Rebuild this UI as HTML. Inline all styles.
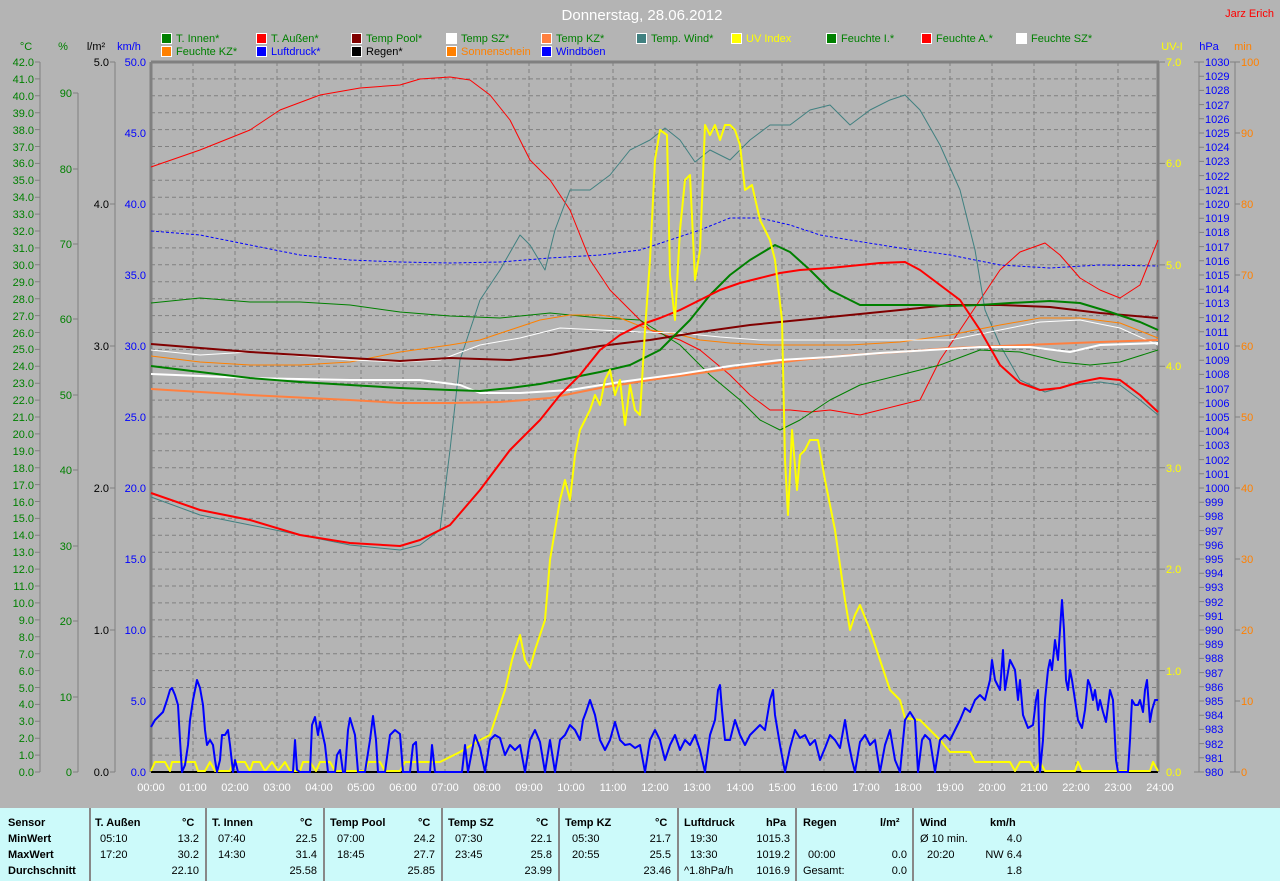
<!DOCTYPE html>
<html><head><meta charset="utf-8">
<style>
html,body{margin:0;padding:0;background:#b4b4b4;}
body{width:1280px;height:881px;position:relative;overflow:hidden;font-family:"Liberation Sans",sans-serif;}
svg{position:absolute;left:0;top:0;}
svg text{font-family:"Liberation Sans",sans-serif;font-size:11px;}
.tbl{position:absolute;left:0;top:808px;width:1280px;height:73px;background:#ccfafa;font-size:11px;color:#000;}
.col{position:absolute;top:0;height:73px;border-left:2px solid #888;}
.r{position:absolute;white-space:nowrap;}
.b{font-weight:bold;}
</style></head><body>
<svg width="1280" height="881" viewBox="0 0 1280 881">
<text x="642" y="20" fill="#fff" font-size="15" text-anchor="middle" style="font-size:15px">Donnerstag, 28.06.2012</text>
<text x="1274" y="17" fill="#f00" text-anchor="end">Jarz Erich</text>
<!-- legend -->
<g stroke="#fff" stroke-width="1">
<rect x="161.5" y="33.5" width="10" height="10" fill="#008000"/>
<rect x="256.5" y="33.5" width="10" height="10" fill="#f00"/>
<rect x="351.5" y="33.5" width="10" height="10" fill="#800000"/>
<rect x="446.5" y="33.5" width="10" height="10" fill="#fff"/>
<rect x="541.5" y="33.5" width="10" height="10" fill="#ff8040"/>
<rect x="636.5" y="33.5" width="10" height="10" fill="#408080"/>
<rect x="731.5" y="33.5" width="10" height="10" fill="#ff0"/>
<rect x="826.5" y="33.5" width="10" height="10" fill="#008000"/>
<rect x="921.5" y="33.5" width="10" height="10" fill="#f00"/>
<rect x="1016.5" y="33.5" width="10" height="10" fill="#fff"/>
<rect x="161.5" y="46.5" width="10" height="10" fill="#ff8000"/>
<rect x="256.5" y="46.5" width="10" height="10" fill="#00f"/>
<rect x="351.5" y="46.5" width="10" height="10" fill="#000"/>
<rect x="446.5" y="46.5" width="10" height="10" fill="#ff8000"/>
<rect x="541.5" y="46.5" width="10" height="10" fill="#00f"/>
</g>
<g>
<text x="176" y="42" fill="#008000">T. Innen*</text>
<text x="271" y="42" fill="#008000">T. Außen*</text>
<text x="366" y="42" fill="#008000">Temp Pool*</text>
<text x="461" y="42" fill="#008000">Temp SZ*</text>
<text x="556" y="42" fill="#008000">Temp KZ*</text>
<text x="651" y="42" fill="#008000">Temp. Wind*</text>
<text x="746" y="42" fill="#ff0">UV Index</text>
<text x="841" y="42" fill="#008000">Feuchte I.*</text>
<text x="936" y="42" fill="#008000">Feuchte A.*</text>
<text x="1031" y="42" fill="#008000">Feuchte SZ*</text>
<text x="176" y="55" fill="#008000">Feuchte KZ*</text>
<text x="271" y="55" fill="#00f">Luftdruck*</text>
<text x="366" y="55" fill="#000">Regen*</text>
<text x="461" y="55" fill="#ff8000">Sonnenschein</text>
<text x="556" y="55" fill="#00f">Windböen</text>
</g>
<!-- axis headers -->
<text x="26" y="50" fill="#008000" text-anchor="middle">°C</text>
<text x="63" y="50" fill="#008000" text-anchor="middle">%</text>
<text x="96" y="50" fill="#000" text-anchor="middle">l/m²</text>
<text x="129" y="50" fill="#00f" text-anchor="middle">km/h</text>
<text x="1172" y="50" fill="#ff0" text-anchor="middle">UV-I</text>
<text x="1209" y="50" fill="#00f" text-anchor="middle">hPa</text>
<text x="1243" y="50" fill="#ff8000" text-anchor="middle">min</text>
<!-- grid -->
<g stroke="#808080" stroke-width="1" stroke-dasharray="4,3" fill="none">
<path d="M151 78.9H1158M151 95.8H1158M151 112.7H1158M151 129.6H1158M151 146.5H1158M151 163.4H1158M151 180.3H1158M151 197.2H1158M151 214.1H1158M151 231H1158M151 247.9H1158M151 264.8H1158M151 281.8H1158M151 298.7H1158M151 315.6H1158M151 332.5H1158M151 349.4H1158M151 366.3H1158M151 383.2H1158M151 400.1H1158M151 417H1158M151 433.9H1158M151 450.8H1158M151 467.7H1158M151 484.6H1158M151 501.5H1158M151 518.4H1158M151 535.3H1158M151 552.2H1158M151 569.1H1158M151 586H1158M151 602.9H1158M151 619.9H1158M151 636.8H1158M151 653.7H1158M151 670.6H1158M151 687.5H1158M151 704.4H1158M151 721.3H1158M151 738.2H1158M151 755.1H1158"/>
<path d="M193 62V772M235 62V772M277 62V772M319 62V772M361 62V772M403 62V772M445 62V772M487 62V772M529 62V772M571 62V772M613 62V772M655 62V772M697 62V772M740 62V772M782 62V772M824 62V772M866 62V772M908 62V772M950 62V772M992 62V772M1034 62V772M1076 62V772M1118 62V772"/>
</g>
<g stroke="#808080" stroke-width="3" fill="none">
<path d="M151 62H1159M151 62V772M1158 62V772"/>
</g>
<!-- axis lines and ticks -->
<g stroke="#808080" stroke-width="1" fill="none">
<path d="M40 62V772M78 93V772M115 62V772M1199 62V772M1235 62V772"/>
<path d="M35 62H40M35 78.9H40M35 95.8H40M35 112.7H40M35 129.6H40M35 146.5H40M35 163.4H40M35 180.3H40M35 197.2H40M35 214.1H40M35 231H40M35 247.9H40M35 264.8H40M35 281.8H40M35 298.7H40M35 315.6H40M35 332.5H40M35 349.4H40M35 366.3H40M35 383.2H40M35 400.1H40M35 417H40M35 433.9H40M35 450.8H40M35 467.7H40M35 484.6H40M35 501.5H40M35 518.4H40M35 535.3H40M35 552.2H40M35 569.1H40M35 586H40M35 602.9H40M35 619.9H40M35 636.8H40M35 653.7H40M35 670.6H40M35 687.5H40M35 704.4H40M35 721.3H40M35 738.2H40M35 755.1H40M35 772H40"/>
<path d="M73 93H78M73 169H78M73 244H78M73 319H78M73 395H78M73 470H78M73 546H78M73 621H78M73 697H78M73 772H78"/>
<path d="M110 62H115M110 204H115M110 346H115M110 488H115M110 630H115M110 772H115"/>
<path d="M1159 62H1165M1159 163.4H1165M1159 264.9H1165M1159 366.3H1165M1159 467.7H1165M1159 569.1H1165M1159 670.6H1165"/>
<path d="M1194 62H1204M1199 76.2H1204M1199 90.4H1204M1199 104.6H1204M1199 118.8H1204M1199 133H1204M1199 147.2H1204M1199 161.4H1204M1199 175.6H1204M1199 189.8H1204M1199 204H1204M1199 218.2H1204M1199 232.4H1204M1199 246.6H1204M1199 260.8H1204M1199 275H1204M1199 289.2H1204M1199 303.4H1204M1199 317.6H1204M1199 331.8H1204M1199 346H1204M1199 360.2H1204M1199 374.4H1204M1199 388.6H1204M1199 402.8H1204M1199 417H1204M1199 431.2H1204M1199 445.4H1204M1199 459.6H1204M1199 473.8H1204M1199 488H1204M1199 502.2H1204M1199 516.4H1204M1199 530.6H1204M1199 544.8H1204M1199 559H1204M1199 573.2H1204M1199 587.4H1204M1199 601.6H1204M1199 615.8H1204M1199 630H1204M1199 644.2H1204M1199 658.4H1204M1199 672.6H1204M1199 686.8H1204M1199 701H1204M1199 715.2H1204M1199 729.4H1204M1199 743.6H1204M1199 757.8H1204M1194 772H1204"/>
<path d="M1230 62H1240M1235 133H1240M1235 204H1240M1235 275H1240M1235 346H1240M1235 417H1240M1235 488H1240M1235 559H1240M1235 630H1240M1235 701H1240M1230 772H1240"/>
</g>
<!-- °C labels -->
<g fill="#008000" text-anchor="end">
<text x="34" y="66">42.0</text><text x="34" y="83">41.0</text><text x="34" y="100">40.0</text><text x="34" y="117">39.0</text><text x="34" y="134">38.0</text><text x="34" y="151">37.0</text><text x="34" y="167">36.0</text><text x="34" y="184">35.0</text><text x="34" y="201">34.0</text><text x="34" y="218">33.0</text><text x="34" y="235">32.0</text><text x="34" y="252">31.0</text><text x="34" y="269">30.0</text><text x="34" y="286">29.0</text><text x="34" y="303">28.0</text><text x="34" y="320">27.0</text><text x="34" y="337">26.0</text><text x="34" y="353">25.0</text><text x="34" y="370">24.0</text><text x="34" y="387">23.0</text><text x="34" y="404">22.0</text><text x="34" y="421">21.0</text><text x="34" y="438">20.0</text><text x="34" y="455">19.0</text><text x="34" y="472">18.0</text><text x="34" y="489">17.0</text><text x="34" y="506">16.0</text><text x="34" y="522">15.0</text><text x="34" y="539">14.0</text><text x="34" y="556">13.0</text><text x="34" y="573">12.0</text><text x="34" y="590">11.0</text><text x="34" y="607">10.0</text><text x="34" y="624">9.0</text><text x="34" y="641">8.0</text><text x="34" y="658">7.0</text><text x="34" y="675">6.0</text><text x="34" y="692">5.0</text><text x="34" y="708">4.0</text><text x="34" y="725">3.0</text><text x="34" y="742">2.0</text><text x="34" y="759">1.0</text><text x="34" y="776">0.0</text>
</g>
<g fill="#008000" text-anchor="end">
<text x="72" y="97">90</text><text x="72" y="173">80</text><text x="72" y="248">70</text><text x="72" y="323">60</text><text x="72" y="399">50</text><text x="72" y="474">40</text><text x="72" y="550">30</text><text x="72" y="625">20</text><text x="72" y="701">10</text><text x="72" y="776">0</text>
</g>
<g fill="#000" text-anchor="end">
<text x="109" y="66">5.0</text><text x="109" y="208">4.0</text><text x="109" y="350">3.0</text><text x="109" y="492">2.0</text><text x="109" y="634">1.0</text><text x="109" y="776">0.0</text>
</g>
<g fill="#00f" text-anchor="end">
<text x="146" y="66">50.0</text><text x="146" y="137">45.0</text><text x="146" y="208">40.0</text><text x="146" y="279">35.0</text><text x="146" y="350">30.0</text><text x="146" y="421">25.0</text><text x="146" y="492">20.0</text><text x="146" y="563">15.0</text><text x="146" y="634">10.0</text><text x="146" y="705">5.0</text><text x="146" y="776">0.0</text>
</g>
<g fill="#ff0">
<text x="1166" y="66">7.0</text><text x="1166" y="167">6.0</text><text x="1166" y="269">5.0</text><text x="1166" y="370">4.0</text><text x="1166" y="472">3.0</text><text x="1166" y="573">2.0</text><text x="1166" y="675">1.0</text><text x="1166" y="776">0.0</text>
</g>
<g fill="#00f">
<text x="1205" y="66">1030</text><text x="1205" y="80">1029</text><text x="1205" y="94">1028</text><text x="1205" y="109">1027</text><text x="1205" y="123">1026</text><text x="1205" y="137">1025</text><text x="1205" y="151">1024</text><text x="1205" y="165">1023</text><text x="1205" y="180">1022</text><text x="1205" y="194">1021</text><text x="1205" y="208">1020</text><text x="1205" y="222">1019</text><text x="1205" y="236">1018</text><text x="1205" y="251">1017</text><text x="1205" y="265">1016</text><text x="1205" y="279">1015</text><text x="1205" y="293">1014</text><text x="1205" y="307">1013</text><text x="1205" y="322">1012</text><text x="1205" y="336">1011</text><text x="1205" y="350">1010</text><text x="1205" y="364">1009</text><text x="1205" y="378">1008</text><text x="1205" y="393">1007</text><text x="1205" y="407">1006</text><text x="1205" y="421">1005</text><text x="1205" y="435">1004</text><text x="1205" y="449">1003</text><text x="1205" y="464">1002</text><text x="1205" y="478">1001</text><text x="1205" y="492">1000</text><text x="1205" y="506">999</text><text x="1205" y="520">998</text><text x="1205" y="535">997</text><text x="1205" y="549">996</text><text x="1205" y="563">995</text><text x="1205" y="577">994</text><text x="1205" y="591">993</text><text x="1205" y="606">992</text><text x="1205" y="620">991</text><text x="1205" y="634">990</text><text x="1205" y="648">989</text><text x="1205" y="662">988</text><text x="1205" y="677">987</text><text x="1205" y="691">986</text><text x="1205" y="705">985</text><text x="1205" y="719">984</text><text x="1205" y="733">983</text><text x="1205" y="748">982</text><text x="1205" y="762">981</text><text x="1205" y="776">980</text>
</g>
<g fill="#ff8000">
<text x="1241" y="66">100</text><text x="1241" y="137">90</text><text x="1241" y="208">80</text><text x="1241" y="279">70</text><text x="1241" y="350">60</text><text x="1241" y="421">50</text><text x="1241" y="492">40</text><text x="1241" y="563">30</text><text x="1241" y="634">20</text><text x="1241" y="705">10</text><text x="1241" y="776">0</text>
</g>
<!-- time labels -->
<g fill="#fff" text-anchor="middle">
<text x="151" y="791">00:00</text><text x="193" y="791">01:00</text><text x="235" y="791">02:00</text><text x="277" y="791">03:00</text><text x="319" y="791">04:00</text><text x="361" y="791">05:00</text><text x="403" y="791">06:00</text><text x="445" y="791">07:00</text><text x="487" y="791">08:00</text><text x="529" y="791">09:00</text><text x="571" y="791">10:00</text><text x="613" y="791">11:00</text><text x="655" y="791">12:00</text><text x="697" y="791">13:00</text><text x="740" y="791">14:00</text><text x="782" y="791">15:00</text><text x="824" y="791">16:00</text><text x="866" y="791">17:00</text><text x="908" y="791">18:00</text><text x="950" y="791">19:00</text><text x="992" y="791">20:00</text><text x="1034" y="791">21:00</text><text x="1076" y="791">22:00</text><text x="1118" y="791">23:00</text><text x="1160" y="791">24:00</text>
</g>
<!-- data -->
<g fill="none" stroke-linejoin="round">
<polyline stroke="#000" stroke-width="2" points="151,772 1158,772"/>
<!-- Feuchte A thin red -->
<polyline stroke="#f00" stroke-width="1" points="151,167 200,150 250,130 280,110 320,95 360,88 400,85 420,79 450,77 470,80 490,95 510,120 530,160 550,180 570,210 590,260 610,290 630,310 650,330 680,340 700,350 730,375 750,395 770,410 790,410 810,412 830,410 860,415 880,410 900,405 920,400 940,360 960,330 980,300 1000,270 1020,252 1045,243 1060,255 1080,278 1100,290 1120,298 1140,285 1158,240"/>
<!-- Temp Wind teal -->
<polyline stroke="#408080" stroke-width="1" points="151,497 200,515 250,525 300,535 350,545 400,550 420,545 440,530 450,450 460,360 470,330 480,300 500,270 520,235 530,245 545,270 555,230 570,190 590,190 610,175 630,150 650,140 665,128 680,140 695,162 710,150 730,160 750,140 770,125 790,125 810,110 830,105 850,125 870,110 890,100 905,95 920,110 940,145 960,190 975,250 985,310 1000,345 1020,380 1045,392 1070,385 1100,382 1120,385 1140,400 1158,415"/>
<!-- Feuchte I thin green -->
<polyline stroke="#008000" stroke-width="1" points="151,303 200,298 250,302 300,302 350,305 400,312 450,316 500,318 550,313 600,318 640,320 680,345 710,375 740,400 760,420 780,430 800,420 830,400 860,385 900,375 940,365 980,350 1020,352 1060,362 1090,365 1120,362 1158,350"/>
<!-- Feuchte KZ thin orange -->
<polyline stroke="#ff8000" stroke-width="1" points="151,356 200,362 250,365 300,365 350,362 400,352 450,345 480,340 510,330 540,320 570,315 600,315 620,318 650,330 680,335 700,340 730,343 770,345 800,345 850,345 900,342 950,335 1000,325 1040,318 1080,318 1120,323 1158,338"/>
<!-- Feuchte SZ thin white -->
<polyline stroke="#fff" stroke-width="1" points="151,350 200,355 250,352 300,356 350,360 400,362 440,360 480,345 520,338 560,328 600,330 640,332 680,333 720,337 760,340 800,340 850,340 900,340 950,340 1000,330 1040,322 1080,320 1120,328 1158,345"/>
<!-- Luftdruck dashed -->
<polyline stroke="#00f" stroke-width="1" stroke-dasharray="3,2" points="151,231 200,235 250,245 300,255 350,260 400,262 450,263 500,262 550,258 600,255 640,250 670,240 700,230 730,218 760,218 790,225 820,235 850,240 900,248 950,255 1000,265 1050,268 1100,265 1158,266"/>
<!-- Temp KZ thick orange -->
<polyline stroke="#ff8040" stroke-width="2" points="151,389 250,395 350,400 400,403 450,403 500,402 550,398 600,388 650,380 700,373 750,366 800,360 850,355 900,352 950,348 1000,346 1050,344 1100,342 1158,340"/>
<!-- Temp SZ thick white -->
<polyline stroke="#fff" stroke-width="2" points="151,374 250,378 350,380 420,380 460,385 480,393 520,393 570,390 620,382 680,374 730,366 780,360 830,357 880,353 930,350 980,347 1030,347 1070,352 1100,345 1158,343"/>
<!-- Temp Pool -->
<polyline stroke="#800000" stroke-width="2" points="151,344 250,352 350,358 400,361 450,358 510,360 550,355 600,346 650,340 700,332 750,325 800,320 850,315 900,310 950,305 1000,305 1050,307 1100,313 1158,318"/>
<!-- T Innen -->
<polyline stroke="#008000" stroke-width="2" points="151,366 200,372 250,378 300,382 350,385 400,388 450,390 480,391 510,388 540,384 570,378 600,372 630,365 660,350 690,320 710,295 730,275 750,260 775,245 790,252 810,270 830,290 860,305 890,305 920,305 950,306 980,305 1010,303 1050,301 1080,303 1110,312 1140,322 1158,330"/>
<!-- T Aussen -->
<polyline stroke="#f00" stroke-width="2" points="151,493 200,510 250,520 300,535 350,543 400,546 420,540 450,525 480,490 510,450 540,420 560,395 580,375 600,350 620,335 640,325 660,318 680,310 700,300 720,290 740,283 760,278 780,273 800,270 830,268 860,265 880,263 905,262 920,270 940,285 960,300 980,330 1000,365 1020,383 1040,390 1060,388 1080,382 1100,378 1120,380 1140,395 1158,412"/>
<!-- UV -->
<polyline stroke="#ff0" stroke-width="2" points="151,771 155,762 165,762 170,771 172,762 195,762 198,771 205,771 210,762 215,771 230,771 233,762 245,762 250,771 253,762 260,762 265,771 272,762 278,771 285,762 290,771 300,771 303,762 310,762 316,771 320,762 330,762 335,771 345,771 350,771 365,771 368,762 380,762 385,771 400,771 405,762 435,762 440,762 460,752 480,740 490,735 495,720 505,690 512,660 515,650 520,635 525,660 530,668 535,650 545,620 550,560 560,500 565,480 570,500 575,455 580,430 585,420 590,410 595,395 600,405 605,380 610,370 615,395 620,380 625,425 630,385 635,410 640,415 645,330 650,260 655,160 660,130 667,135 670,275 675,320 680,230 685,180 690,175 695,280 700,250 705,125 710,135 715,125 720,140 725,125 730,125 735,130 740,145 745,190 752,185 760,220 770,240 775,260 782,320 785,460 788,515 792,430 797,490 800,455 805,450 810,440 818,440 825,480 835,530 845,600 850,630 855,615 860,605 870,630 880,660 890,690 900,700 905,718 920,720 930,730 940,740 950,752 970,752 975,762 1010,762 1015,771 1020,762 1030,762 1035,771 1040,762 1045,771 1075,771 1078,762 1082,771 1150,771 1153,762 1158,771"/>
<!-- Wind -->
<polyline stroke="#00f" stroke-width="2" points="151,727 155,720 160,715 163,712 167,700 170,690 172,688 175,695 178,705 180,740 182,772 185,765 188,745 190,720 193,700 195,690 197,680 200,688 203,705 205,730 207,745 210,740 213,745 215,760 217,772 220,760 222,735 225,735 228,730 230,745 233,772 235,760 238,772 293,772 295,740 297,770 300,772 310,772 312,725 315,717 318,735 320,722 325,745 328,772 335,772 337,755 340,750 343,772 345,772 348,730 350,718 355,735 358,772 365,772 370,740 373,716 376,740 378,772 385,772 390,735 395,730 400,734 403,772 410,772 413,745 416,742 418,772 430,772 432,745 435,772 462,772 465,745 468,772 475,735 480,748 485,772 490,740 495,735 500,738 505,755 510,745 515,750 520,745 525,772 530,740 535,730 540,742 545,772 550,740 555,772 560,740 565,735 570,725 575,730 580,740 583,720 586,712 590,700 595,715 600,740 605,750 610,740 615,722 620,740 625,745 630,744 635,748 640,745 645,772 650,740 655,730 660,740 665,760 670,745 675,735 680,750 685,740 690,745 695,735 700,750 705,772 710,735 715,720 718,690 720,685 722,710 725,740 730,740 735,720 740,735 745,745 750,735 755,730 760,725 765,730 770,700 773,690 775,715 780,745 785,772 790,748 795,730 800,738 805,735 810,745 815,740 820,760 825,748 830,735 835,740 840,748 845,720 848,740 852,760 855,772 860,742 865,735 870,745 875,740 880,772 885,745 890,730 895,760 900,772 905,720 910,712 915,720 918,772 922,740 925,735 930,740 935,772 940,740 945,735 950,740 955,730 960,720 965,708 970,712 975,700 980,695 985,700 990,680 992,660 995,680 1000,690 1003,650 1005,690 1010,660 1015,670 1018,700 1020,680 1023,715 1028,728 1033,725 1036,700 1038,690 1040,772 1043,740 1045,700 1048,670 1050,660 1052,670 1055,640 1058,660 1060,630 1062,600 1064,630 1066,680 1068,690 1070,670 1072,680 1075,700 1078,720 1082,728 1085,710 1088,680 1090,685 1093,700 1095,690 1098,710 1100,700 1103,712 1106,722 1110,690 1113,700 1116,760 1118,772 1128,772 1130,740 1132,700 1135,705 1138,705 1140,700 1143,712 1145,690 1147,680 1150,722 1152,710 1155,700 1158,700"/>
</g>
</svg>
<div class="tbl">
<div class="r b" style="left:8px;top:9px">Sensor</div>
<div class="r b" style="left:8px;top:25px">MinWert</div>
<div class="r b" style="left:8px;top:41px">MaxWert</div>
<div class="r b" style="left:8px;top:57px">Durchschnitt</div>

<div class="col" style="left:89px"></div>
<div class="r b" style="left:95px;top:9px">T. Außen</div><div class="r b" style="left:182px;top:9px">°C</div>
<div class="r" style="left:100px;top:25px">05:10</div><div class="r" style="right:1081px;top:25px">13.2</div>
<div class="r" style="left:100px;top:41px">17:20</div><div class="r" style="right:1081px;top:41px">30.2</div>
<div class="r" style="right:1081px;top:57px">22.10</div>

<div class="col" style="left:205px"></div>
<div class="r b" style="left:212px;top:9px">T. Innen</div><div class="r b" style="left:300px;top:9px">°C</div>
<div class="r" style="left:218px;top:25px">07:40</div><div class="r" style="right:963px;top:25px">22.5</div>
<div class="r" style="left:218px;top:41px">14:30</div><div class="r" style="right:963px;top:41px">31.4</div>
<div class="r" style="right:963px;top:57px">25.58</div>

<div class="col" style="left:323px"></div>
<div class="r b" style="left:330px;top:9px">Temp Pool</div><div class="r b" style="left:418px;top:9px">°C</div>
<div class="r" style="left:337px;top:25px">07:00</div><div class="r" style="right:845px;top:25px">24.2</div>
<div class="r" style="left:337px;top:41px">18:45</div><div class="r" style="right:845px;top:41px">27.7</div>
<div class="r" style="right:845px;top:57px">25.85</div>

<div class="col" style="left:441px"></div>
<div class="r b" style="left:448px;top:9px">Temp SZ</div><div class="r b" style="left:536px;top:9px">°C</div>
<div class="r" style="left:455px;top:25px">07:30</div><div class="r" style="right:728px;top:25px">22.1</div>
<div class="r" style="left:455px;top:41px">23:45</div><div class="r" style="right:728px;top:41px">25.8</div>
<div class="r" style="right:728px;top:57px">23.99</div>

<div class="col" style="left:558px"></div>
<div class="r b" style="left:565px;top:9px">Temp KZ</div><div class="r b" style="left:655px;top:9px">°C</div>
<div class="r" style="left:572px;top:25px">05:30</div><div class="r" style="right:609px;top:25px">21.7</div>
<div class="r" style="left:572px;top:41px">20:55</div><div class="r" style="right:609px;top:41px">25.5</div>
<div class="r" style="right:609px;top:57px">23.46</div>

<div class="col" style="left:677px"></div>
<div class="r b" style="left:684px;top:9px">Luftdruck</div><div class="r b" style="left:766px;top:9px">hPa</div>
<div class="r" style="left:690px;top:25px">19:30</div><div class="r" style="right:490px;top:25px">1015.3</div>
<div class="r" style="left:690px;top:41px">13:30</div><div class="r" style="right:490px;top:41px">1019.2</div>
<div class="r" style="left:684px;top:57px">^1.8hPa/h</div><div class="r" style="right:490px;top:57px">1016.9</div>

<div class="col" style="left:795px"></div>
<div class="r b" style="left:803px;top:9px">Regen</div><div class="r b" style="left:880px;top:9px">l/m²</div>
<div class="r" style="left:808px;top:41px">00:00</div><div class="r" style="right:373px;top:41px">0.0</div>
<div class="r" style="left:803px;top:57px">Gesamt:</div><div class="r" style="right:373px;top:57px">0.0</div>

<div class="col" style="left:912px"></div>
<div class="r b" style="left:920px;top:9px">Wind</div><div class="r b" style="left:990px;top:9px">km/h</div>
<div class="r" style="left:920px;top:25px">Ø 10 min.</div><div class="r" style="right:258px;top:25px">4.0</div>
<div class="r" style="left:927px;top:41px">20:20</div><div class="r" style="right:258px;top:41px">NW 6.4</div>
<div class="r" style="right:258px;top:57px">1.8</div>
</div>
</body></html>
